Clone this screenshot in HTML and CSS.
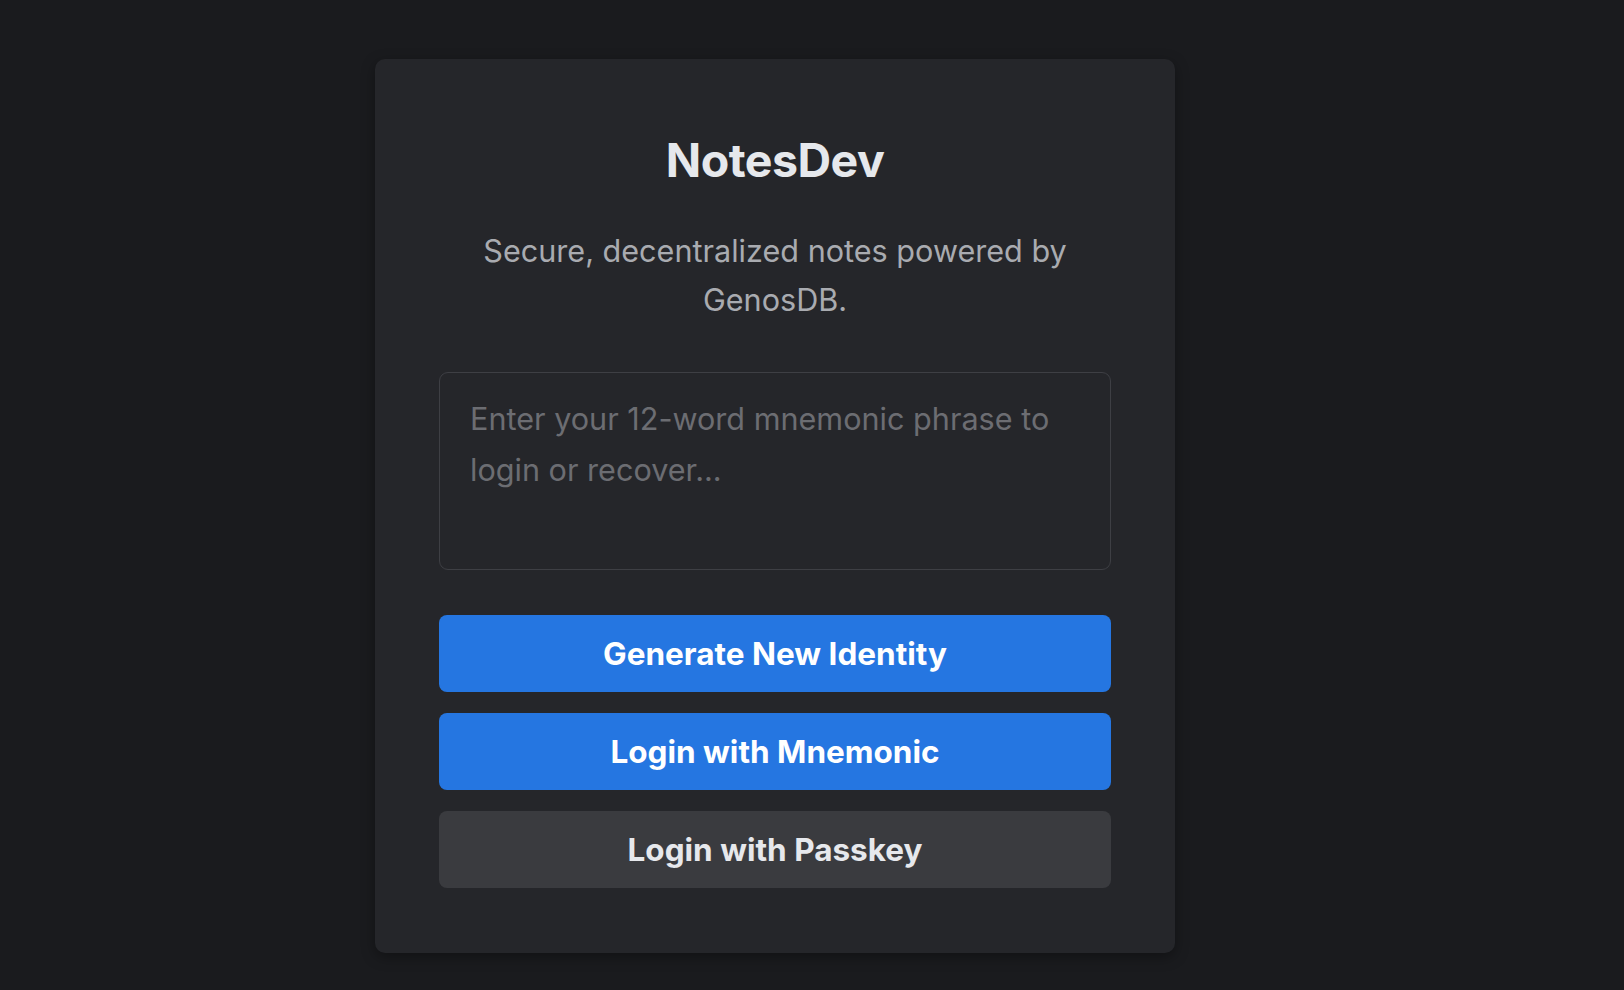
FILE: index.html
```html
<!DOCTYPE html>
<html lang="en">
<head>
<meta charset="utf-8">
<title>NotesDev</title>
<link rel="stylesheet" href="styles.css">
</head>
<body>
<main class="page">
  <section class="card">
    <h1 class="title">NotesDev</h1>
    <p class="subtitle">Secure, decentralized notes powered by GenosDB.</p>
    <textarea class="mnemonic" placeholder="Enter your 12-word mnemonic phrase to login or recover..."></textarea>
    <div class="actions">
      <button class="btn btn-primary">Generate New Identity</button>
      <button class="btn btn-primary">Login with Mnemonic</button>
      <button class="btn btn-secondary">Login with Passkey</button>
    </div>
  </section>
</main>
</body>
</html>
```

FILE: styles.css
```css
* { box-sizing: border-box; }
html, body { margin: 0; padding: 0; }
body {
  background: #1a1b1e;
  font-family: Inter, "Noto Sans", "Liberation Sans", sans-serif;
  min-height: 990px;
}
.page {
  display: flex;
  justify-content: center;
  padding: 59px 74px 0 0;
}
.card {
  width: 800px;
  background: #25262a;
  border-radius: 10px;
  padding: 73px 64px 65px;
  box-shadow: 0 4px 14px rgba(0, 0, 0, 0.35);
  display: flex;
  flex-direction: column;
}
.title {
  margin: 0;
  font-size: 46.5px;
  line-height: 56px;
  font-weight: 700;
  color: #e6e8ec;
  text-align: center;
  letter-spacing: -0.5px;
}
.subtitle {
  margin: 39px 0 0;
  font-size: 30.6px;
  line-height: 48.5px;
  color: #a9abb0;
  text-align: center;
}
.mnemonic {
  margin-top: 48px;
  width: 100%;
  height: 198px;
  resize: none;
  background: #25262a;
  border: 1px solid #3e3f44;
  border-radius: 9px;
  padding: 20px 30px;
  font-family: inherit;
  font-size: 30.6px;
  line-height: 51px;
  color: #e6e8ec;
  outline: none;
}
.mnemonic::placeholder { color: #6c6d72; }
.actions {
  margin-top: 45px;
  display: flex;
  flex-direction: column;
  gap: 21px;
}
.btn {
  height: 77px;
  border: none;
  border-radius: 8px;
  font-family: inherit;
  font-size: 31.5px;
  font-weight: 700;
  cursor: pointer;
}
.btn-primary { background: #2576e1; color: #ffffff; }
.btn-secondary { background: #3a3b3f; color: #e6e8ec; }
```
